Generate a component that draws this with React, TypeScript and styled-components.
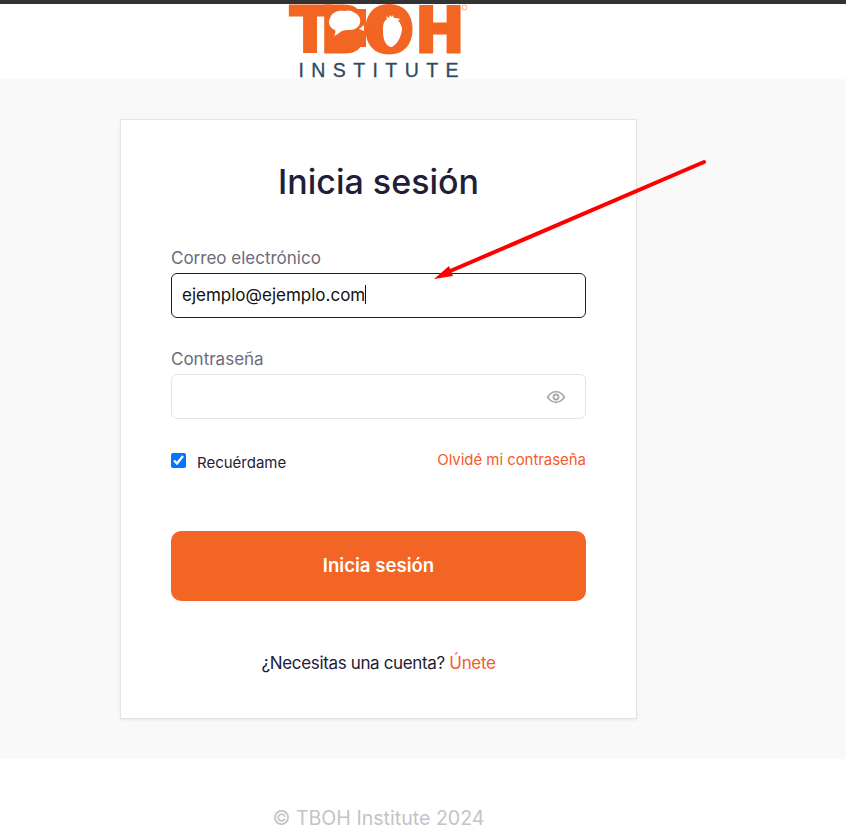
import React from 'react'
import styled, { createGlobalStyle } from 'styled-components'

const GlobalStyle = createGlobalStyle`
  html, body {
    margin: 0;
    padding: 0;
    background: #fff;
    font-family: Inter, 'Liberation Sans', sans-serif;
  }
  * {
    box-sizing: border-box;
  }
`

const Logo = () => (
  <LogoSvg viewBox="0 0 180 75" width="180" height="75">
    <text
      y="47.5"
      transform="scale(0.95 1)"
      fontFamily="'DejaVu Sans', sans-serif"
      fontWeight="700"
      fontSize="62"
      fill="#f26522"
      stroke="#f26522"
      strokeWidth="3"
    >
      <tspan x="2">T</tspan>
      <tspan x="34">B</tspan>
      <tspan x="80">O</tspan>
      <tspan x="134">H</tspan>
    </text>
    {/* fill the letter counters, the brain and heart sit on top */}
    <rect x="46" y="5" width="32" height="38" fill="#f26522" />
    <ellipse cx="104" cy="25" rx="17" ry="19" fill="#f26522" />
    <path
      d="M43 12c2-4 8-6 13-5 3-1 8-1 11 2 4 2 6 6 5 10-1 4-5 7-10 7-3 0-6 0-8 1-2 1-5 4-8 5 1-2 2-4 1-6-3-1-6-4-6-8 0-2 1-4 2-6z"
      fill="#fff"
    />
    <path d="M71 25l5-4 0 6z" fill="#fff" />
    <path
      d="M95 24c0-4 1-7 4-9l-1-3 3 2 1-3 2 2 1-2 1 3c2 0 4 0 6 1l-2 2c2 1 3 4 4 7 0 7-4 16-10 19-2 0-5-1-7-5-2-4-2-9-2-14z"
      fill="#fff"
    />
    <circle cx="176.5" cy="3.5" r="2.4" fill="none" stroke="#efaa88" strokeWidth="1" />
    <text
      x="10.5"
      y="73"
      fontFamily="'Liberation Sans', sans-serif"
      fontSize="19.5"
      textLength="160"
      fill="#2f4a60"
      stroke="#2f4a60"
      strokeWidth="0.3"
    >
      INSTITUTE
    </text>
  </LogoSvg>
)

const EyeIcon = () => (
  <svg width="20" height="20" viewBox="0 0 24 24" fill="none" stroke="#a9a9ae" strokeWidth="2.2">
    <path d="M2 12s3.6-6.5 10-6.5S22 12 22 12s-3.6 6.5-10 6.5S2 12 2 12z" />
    <circle cx="12" cy="12" r="3" />
  </svg>
)

const App = () => {
  return (
    <Page>
      <GlobalStyle />
      <TopBar />
      <Header>
        <Logo />
      </Header>
      <Main>
        <Card>
          <Title>Inicia sesión</Title>
          <Field>
            <Label>Correo electrónico</Label>
            <InputBox $active>
              ejemplo@ejemplo.com
              <Caret />
            </InputBox>
          </Field>
          <Field>
            <Label>Contraseña</Label>
            <InputBox>
              <EyeButton>
                <EyeIcon />
              </EyeButton>
            </InputBox>
          </Field>
          <OptionsRow>
            <RememberLabel>
              <Checkbox type="checkbox" defaultChecked />
              <RememberText>Recuérdame</RememberText>
            </RememberLabel>
            <Link href="#">Olvidé mi contraseña</Link>
          </OptionsRow>
          <SubmitButton type="button">Inicia sesión</SubmitButton>
          <SignUp>
            ¿Necesitas una cuenta? <SignUpLink href="#">Únete</SignUpLink>
          </SignUp>
        </Card>
      </Main>
      <Footer>© TBOH Institute 2024</Footer>
      <Arrow viewBox="0 0 846 837" width="846" height="837">
        <line x1="704" y1="162" x2="448" y2="272" stroke="#ff0000" strokeWidth="4" strokeLinecap="round" />
        <polygon points="434,279 449,266 453,276" fill="#ff0000" />
      </Arrow>
    </Page>
  )
}

export default App

const Page = styled.div`
  position: relative;
  width: 846px;
  height: 837px;
  overflow: hidden;
  background: #fff;
`

const TopBar = styled.div`
  height: 4px;
  background: #333;
`

const Header = styled.header`
  height: 75px;
  padding-left: 288px;
`

const LogoSvg = styled.svg`
  display: block;
`

const Main = styled.main`
  height: 680px;
  padding: 40px 0 0 120px;
  background: #f9f9f9;
`

const Card = styled.section`
  width: 517px;
  height: 600px;
  padding: 40px 50px 0;
  background: #fff;
  border: 1px solid #e3e3e6;
  box-shadow: 0 1px 3px rgba(0, 0, 0, 0.08);
`

const Title = styled.h1`
  margin: 0 0 43px;
  font-size: 34px;
  line-height: 43px;
  font-weight: 500;
  text-align: center;
  color: #1f2037;
`

const Field = styled.div`
  margin-bottom: 29px;
`

const Label = styled.div`
  margin-bottom: 3px;
  font-size: 17px;
  line-height: 24px;
  color: #6b6b7b;
`

const InputBox = styled.div<{ $active?: boolean }>`
  position: relative;
  display: flex;
  align-items: center;
  height: 45px;
  padding: 0 10px 2px;
  border: 1px solid ${(p) => (p.$active ? '#1f1f24' : '#e3e3ea')};
  border-radius: 6px;
  font-size: 17px;
  color: #111;
  background: #fff;
`

const Caret = styled.span`
  width: 1px;
  height: 19px;
  background: #111;
`

const EyeButton = styled.span`
  position: absolute;
  right: 19px;
  top: 12px;
  display: flex;
`

const OptionsRow = styled.div`
  display: flex;
  justify-content: space-between;
  align-items: flex-start;
  height: 83px;
  margin-top: 1px;
`

const RememberLabel = styled.label`
  display: flex;
  align-items: flex-start;
  gap: 11px;
  font-size: 15px;
  line-height: 22px;
  color: #1f2037;
`

const RememberText = styled.span`
  margin-top: 4px;
`

const Checkbox = styled.input`
  width: 15px;
  height: 15px;
  margin: 5px 0 0;
  accent-color: #0075ff;
`

const Link = styled.a`
  margin-top: 1px;
  font-size: 15px;
  letter-spacing: -0.05px;
  line-height: 22px;
  color: #f55a2b;
  text-decoration: none;
`

const SubmitButton = styled.button`
  display: block;
  width: 100%;
  height: 70px;
  border: 0;
  border-radius: 10px;
  background: #f36524;
  color: #fff;
  font-family: inherit;
  font-size: 18.6px;
  font-weight: 600;
  padding-bottom: 3px;
`

const SignUp = styled.p`
  margin: 50px 0 0;
  font-size: 17px;
  letter-spacing: -0.35px;
  line-height: 24px;
  text-align: center;
  color: #1f2037;
`

const SignUpLink = styled.a`
  color: #f55a2b;
  text-decoration: none;
`

const Footer = styled.footer`
  padding-top: 47px;
  width: 517px;
  margin-left: 120px;
  font-size: 19.6px;
  line-height: 24px;
  text-align: center;
  color: #c2c4ca;
`

const Arrow = styled.svg`
  position: absolute;
  top: 0;
  left: 0;
  pointer-events: none;
`
